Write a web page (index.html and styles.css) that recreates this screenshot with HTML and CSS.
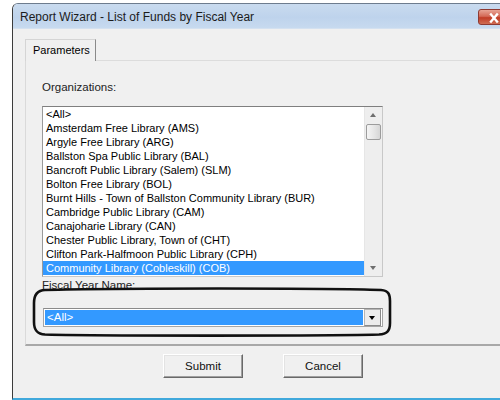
FILE: index.html
```html
<!DOCTYPE html>
<html>
<head>
<meta charset="utf-8">
<title>Report Wizard</title>
<link rel="stylesheet" href="styles.css">
</head>
<body>
<div class="window">
  <div class="titlebar">
    <span class="title">Report Wizard - List of Funds by Fiscal Year</span>
    <span class="close"><svg width="22" height="16" viewBox="0 0 22 16"><path d="M8 4.5 L14 11.5 M14 4.5 L8 11.5" stroke="#fff" stroke-width="2.4" stroke-linecap="square"/></svg></span>
  </div>
  <div class="client">
    <div class="tabs">
      <div class="tab">Parameters</div>
      <div class="tab-rest"></div>
    </div>
    <div class="panel">
      <div class="label">Organizations:</div>
      <div class="listbox">
        <ul class="items">
          <li>&lt;All&gt;</li>
          <li>Amsterdam Free Library (AMS)</li>
          <li>Argyle Free Library (ARG)</li>
          <li>Ballston Spa Public Library (BAL)</li>
          <li>Bancroft Public Library (Salem) (SLM)</li>
          <li>Bolton Free Library (BOL)</li>
          <li>Burnt Hills - Town of Ballston Community Library (BUR)</li>
          <li>Cambridge Public Library (CAM)</li>
          <li>Canajoharie Library (CAN)</li>
          <li>Chester Public Library, Town of (CHT)</li>
          <li>Clifton Park-Halfmoon Public Library (CPH)</li>
          <li class="selected">Community Library (Cobleskill) (COB)</li>
        </ul>
        <div class="scrollbar">
          <div class="arrow up"></div>
          <div class="thumb"></div>
          <div class="track"></div>
          <div class="arrow down"></div>
        </div>
      </div>
      <div class="label fiscal">Fiscal Year Name:</div>
      <div class="combo">
        <div class="combo-value">&lt;All&gt;</div>
        <div class="combo-btn"><span class="tri"></span></div>
      </div>
    </div>
    <div class="buttons">
      <button class="btn">Submit</button>
      <button class="btn">Cancel</button>
    </div>
  </div>
</div>
<svg class="callout" width="364" height="52" viewBox="0 0 364 52">
  <path d="M14 3 C 80 1, 300 1, 350 3 C 358 3.5, 359 8, 359 14 L 359 36 C 359 44, 356 47, 348 47.5 C 280 49, 80 49, 14 47.5 C 6 47, 3 43, 3 35 L 3 16 C 3 7, 7 3.3, 14 3 Z" fill="none" stroke="#111" stroke-width="2.6"/>
</svg>
</body>
</html>
```

FILE: styles.css
```css
html, body {
  margin: 0;
  padding: 0;
  background: #fff;
  width: 500px;
  height: 400px;
  overflow: hidden;
  font-family: "Liberation Sans", Arial, sans-serif;
  font-size: 11px;
  color: #000;
}

/* the dialog runs off the right edge, so it is clipped there */
.window {
  margin: 3px 0 0 12px;
  width: 488px;
  height: 397px;
  box-sizing: border-box;
  border-left: 1px solid #3c3c3c;
  border-top: 1px solid #6d7c8e;
  border-top-left-radius: 6px;
  border-bottom: 2px solid #41a9dc;
  background: #f0f0f0;
  display: flex;
  flex-direction: column;
  overflow: hidden;
}

.titlebar {
  height: 24px;
  flex: none;
  background: linear-gradient(#c9dbef, #bed3ec 55%, #c7daef);
  border-bottom: 1px solid #d4e1f0;
  display: flex;
  align-items: center;
  padding-left: 7px;
  position: relative;
}

.title {
  font-size: 12px;
  color: #1b1b1b;
  margin-top: 1px;
}

.close {
  position: absolute;
  left: 465px;
  top: 5px;
  width: 40px;
  height: 16px;
  border: 1px solid #8e3a32;
  border-radius: 3px;
  background: linear-gradient(#e8a495, #d46a57 45%, #c13c26 55%, #cf6d53);
  box-sizing: border-box;
}

.close svg {
  display: block;
  margin-left: 4px;
}

.client {
  flex: 1;
  padding: 10px 0 0 12px;
  display: flex;
  flex-direction: column;
}

.tabs {
  display: flex;
  height: 22px;
}

.tab {
  width: 71px;
  height: 22px;
  box-sizing: border-box;
  border: 1px solid #d5d5d5;
  border-right: 1px solid #8a8a8a;
  border-bottom: none;
  background: #f0f0f0;
  padding: 4px 0 0 7px;
  font-size: 11px;
  position: relative;
  z-index: 1;
}

.tab-rest {
  flex: 1;
  border-bottom: 1px solid #dcdcdc;
}

.panel {
  height: 285px;
  box-sizing: border-box;
  border-left: 1px solid #dadada;
  border-bottom: 2px solid #a8a8a8;
  padding: 20px 0 0 16px;
}

.label {
  height: 13px;
  line-height: 13px;
  font-size: 11.5px;
  color: #222;
}

.listbox {
  margin-top: 12px;
  width: 341px;
  height: 171px;
  box-sizing: border-box;
  border: 1px solid #c8c8c8;
  border-top-color: #7f7f7f;
  border-left-color: #9a9a9a;
  background: #fff;
  display: flex;
}

.items {
  list-style: none;
  margin: 0;
  padding: 0;
  flex: 1;
  min-width: 0;
}

.items li {
  height: 14px;
  line-height: 14px;
  padding-left: 3px;
  white-space: nowrap;
  overflow: hidden;
}

.items li.selected {
  background: #3399ff;
  color: #fff;
}

.scrollbar {
  width: 17px;
  flex: none;
  background: #eeeeee;
  border-left: 1px solid #e6e6e6;
  display: flex;
  flex-direction: column;
  align-items: center;
}

.arrow {
  height: 17px;
  width: 17px;
  position: relative;
}

.arrow::after {
  content: "";
  position: absolute;
  left: 5px;
  width: 0;
  height: 0;
  border-left: 3.5px solid transparent;
  border-right: 3.5px solid transparent;
}

.arrow.up::after {
  top: 6px;
  border-bottom: 4px solid #6e6e6e;
}

.arrow.down::after {
  top: 7px;
  border-top: 4px solid #6e6e6e;
}

.thumb {
  width: 15px;
  height: 16px;
  box-sizing: border-box;
  border: 1px solid #9c9c9c;
  border-radius: 2px;
  background: linear-gradient(90deg, #f5f5f5, #e4e4e4 60%, #d6d6d6);
}

.track {
  flex: 1;
}

.fiscal {
  margin-top: 2px;
}

.combo {
  margin-top: 16px;
  margin-left: 1px;
  width: 340px;
  height: 19px;
  box-sizing: border-box;
  border: 1px solid #a5a5a5;
  border-top-color: #8a8a8a;
  background: #fff;
  display: flex;
  padding: 1px;
}

.combo-value {
  flex: 1;
  background: #3399ff;
  color: #fff;
  font-size: 11.5px;
  line-height: 15px;
  padding-left: 2px;
}

.combo-btn {
  width: 17px;
  margin-left: 1px;
  margin-top: -1px;
  margin-bottom: -1px;
  box-sizing: border-box;
  border: 1px solid #b5b5b5;
  border-right-color: #8a8a8a;
  border-bottom-color: #8a8a8a;
  background: #ececec;
  position: relative;
}

.tri {
  position: absolute;
  left: 4px;
  top: 6px;
  width: 0;
  height: 0;
  border-left: 3.5px solid transparent;
  border-right: 3.5px solid transparent;
  border-top: 4px solid #000;
}

.buttons {
  display: flex;
  gap: 40px;
  padding: 8px 0 0 138px;
}

.btn {
  width: 80px;
  height: 24px;
  box-sizing: border-box;
  font-family: "Liberation Sans", Arial, sans-serif;
  font-size: 11.5px;
  color: #111;
  background: #f0f0f0;
  border: 1px solid;
  border-color: #ffffff #696969 #696969 #ffffff;
  box-shadow: inset -1px -1px 0 #a0a0a0, inset 1px 1px 0 #e3e3e3;
  padding: 0;
}

/* hand-drawn marker ring round the fiscal year field */
.callout {
  position: absolute;
  left: 31px;
  top: 287px;
}
```
